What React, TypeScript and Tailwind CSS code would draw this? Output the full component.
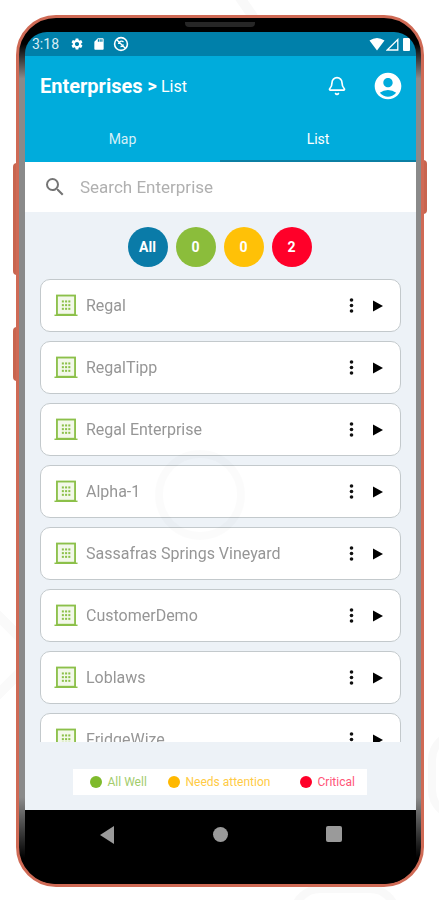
import { Bell } from "lucide-react";
import { MdAccountCircle, MdSdCard, MdSearch, MdSettings } from "react-icons/md";

const enterprises = [
  "Regal",
  "RegalTipp",
  "Regal Enterprise",
  "Alpha-1",
  "Sassafras Springs Vineyard",
  "CustomerDemo",
  "Loblaws",
  "FridgeWize",
];

function BuildingIcon() {
  return (
    <svg width="24" height="23" viewBox="0 0 26 24" className="shrink-0">
      <rect x="3.2" y="1.2" width="19.6" height="20.8" fill="#f3f8ea" stroke="#8cc04a" strokeWidth="2" />
      <path d="M0.5 22.6h25" stroke="#8cc04a" strokeWidth="1.6" />
      {[7.5, 11.5, 15.5].map((y) =>
        [9.5, 13, 16.5].map((x) => <rect key={`${x}-${y}`} x={x - 1} y={y - 1} width="2.2" height="2.2" fill="#8cc04a" />),
      )}
    </svg>
  );
}

function EnterpriseCard({ name }: { name: string }) {
  return (
    <div className="flex h-[53px] shrink-0 items-center rounded-[10px] border border-[#c3c9cc] bg-white pl-[13px] pr-[17px]">
      <BuildingIcon />
      <span className="ml-[8px] flex-1 text-[16px] text-[#969696]">{name}</span>
      <svg width="5" height="15" viewBox="0 0 5 15" className="mr-[19px]">
        <circle cx="2.5" cy="2" r="1.8" fill="#111" />
        <circle cx="2.5" cy="7.5" r="1.8" fill="#111" />
        <circle cx="2.5" cy="13" r="1.8" fill="#111" />
      </svg>
      <svg width="10" height="12" viewBox="0 0 10 12">
        <path d="M0 0.5 10 6 0 11.5Z" fill="#000" />
      </svg>
    </div>
  );
}

function CountBadge({ label, color }: { label: string; color: string }) {
  return (
    <div className={`flex h-10 w-10 items-center justify-center rounded-full text-[14px] font-bold text-white ${color}`}>
      {label}
    </div>
  );
}

function LegendItem({ label, dot, text, width }: { label: string; dot: string; text: string; width: string }) {
  return (
    <div className={`flex items-center gap-[6px] ${width}`}>
      <span className={`h-3 w-3 rounded-full ${dot}`} />
      <span className={`text-[12px] ${text}`}>{label}</span>
    </div>
  );
}

export default function App() {
  return (
    <div className="relative h-[900px] w-[439px] overflow-hidden bg-white pl-[16px] pt-[15px] font-['Roboto',sans-serif]">
      {/* faint watermark behind the phone */}
      <div className="absolute left-[240px] top-[-10px] h-[30px] w-[10px] -rotate-[35deg] bg-[#f9f9f9]" />
      <div className="absolute left-[-40px] top-[620px] h-[70px] w-[70px] rotate-45 border-[10px] border-[#fafafa]" />
      <div className="absolute left-[428px] top-[730px] h-[90px] w-[60px] rounded-full border-[8px] border-[#f9f9f9]" />
      <div className="absolute left-[290px] top-[885px] h-[60px] w-[110px] rounded-full border-[8px] border-[#f9f9f9]" />

      <div className="absolute left-[13px] top-[163px] h-[112px] w-[4px] rounded-l bg-[#c8654f]" />
      <div className="absolute left-[13px] top-[327px] h-[54px] w-[4px] rounded-l bg-[#c8654f]" />
      <div className="absolute left-[423px] top-[160px] h-[54px] w-[4px] rounded-r bg-[#c8654f]" />

      <div className="relative flex h-[872px] w-[408px] flex-col overflow-hidden rounded-[40px] border-[3px] border-[#cf6a55] bg-[linear-gradient(to_bottom,#000_3%,#8a8a8a_7%,#8a8a8a_90%,#000_97%)] blur-[0.4px]">
        <div className="absolute left-[166px] top-[4px] h-[5px] w-[70px] rounded-b bg-[#262626]" />

        <div className="ml-[6px] mr-[5px] mt-[14px] flex h-[778px] shrink-0 flex-col overflow-hidden rounded-t-[22px]">
          {/* status bar */}
          <div className="flex h-[24px] shrink-0 items-center bg-[#0080aa] pl-[7px] pr-[6px] text-white">
            <span className="text-[14px] text-[#d8edf5]">3:18</span>
            <MdSettings className="ml-[11px]" size={14} />
            <MdSdCard className="ml-[8px]" size={14} />
            <svg width="16" height="16" viewBox="0 0 16 16" className="ml-[7px]">
              <circle cx="8" cy="8" r="6.4" fill="none" stroke="white" strokeWidth="1.6" />
              <path d="M3.5 3.5 12.5 12.5M5.5 8a3 3 0 0 1 5-2M7.5 10.5a3 3 0 0 0 3-2" fill="none" stroke="white" strokeWidth="1.3" />
            </svg>
            <div className="flex-1" />
            <svg width="16" height="13" viewBox="0 0 16 13">
              <path d="M0.5 2.5Q8-2.5 15.5 2.5L8 12.5Z" fill="white" />
            </svg>
            <svg width="13" height="13" viewBox="0 0 13 13" className="ml-[1px]">
              <path d="M11.8 1.5V12H1.2Z" fill="none" stroke="white" strokeWidth="1.3" />
            </svg>
            <div className="ml-[4px] h-[13px] w-[7px] rounded-[1px] bg-white" />
          </div>

          {/* app bar */}
          <div className="flex h-[60px] shrink-0 items-center bg-[#00acdc] pl-[15px] pr-[12px] text-white">
            <span className="text-[20px] font-bold leading-none">Enterprises</span>
            <span className="ml-[5px] text-[18px] font-bold leading-none">&gt;</span>
            <span className="ml-[4px] mt-[2px] text-[16px] leading-none">List</span>
            <div className="flex-1" />
            <Bell size={20} strokeWidth={2} />
            <MdAccountCircle className="ml-[25px]" size={32} />
          </div>

          {/* tabs */}
          <div className="flex h-[46px] shrink-0 bg-[#00acdc] text-[14px] text-[#d5f0f8]">
            <div className="flex w-[195px] items-center justify-center">Map</div>
            <div className="flex flex-1 items-center justify-center border-b-2 border-[#0b7fa3] pt-[2px] text-white">List</div>
          </div>

          {/* search */}
          <div className="flex h-[50px] shrink-0 items-center bg-white pl-[18px]">
            <MdSearch size={24} className="text-[#757575]" />
            <span className="ml-[13px] pt-[2px] text-[17px] text-[#b0b0b0]">Search Enterprise</span>
          </div>

          <div className="relative flex flex-1 flex-col bg-[#edf2f7]">
            {/* status counts */}
            <div className="flex h-[67px] shrink-0 items-center justify-center gap-[8px] pr-[2px] pt-[3px]">
              <CountBadge label="All" color="bg-[#0a7ba8]" />
              <CountBadge label="0" color="bg-[#8bbd3b]" />
              <CountBadge label="0" color="bg-[#ffc107]" />
              <CountBadge label="2" color="bg-[#ff0029]" />
            </div>

            {/* list */}
            <div className="flex h-[463px] shrink-0 flex-col gap-[9px] overflow-hidden px-[15px]">
              {enterprises.map((name) => (
                <EnterpriseCard key={name} name={name} />
              ))}
            </div>

            {/* legend */}
            <div className="ml-[-2px] mt-[27px] flex h-[26px] w-[294px] items-center self-center bg-white pl-[17px]">
              <LegendItem label="All Well" dot="bg-[#7fba2c]" text="text-[#a3cc6c]" width="w-[78px]" />
              <LegendItem label="Needs attention" dot="bg-[#ffb800]" text="text-[#ffcb45]" width="w-[132px]" />
              <LegendItem label="Critical" dot="bg-[#ff0029]" text="text-[#ff5577]" width="w-[60px]" />
            </div>

            {/* watermark ring showing through the screen */}
            <div className="pointer-events-none absolute left-[130px] top-[238px] h-[90px] w-[90px] rounded-full border-[8px] border-[#00000004]" />
          </div>
        </div>

        {/* nav bar */}
        <div className="ml-[6px] mr-[5px] flex h-[74px] items-start justify-between rounded-b-[30px] bg-black px-[74px] pt-[16px]">
          <svg width="16" height="18" viewBox="0 0 16 18">
            <path d="M15 0V18L1 9Z" fill="#9a9a9a" />
          </svg>
          <div className="mt-[1px] h-[15px] w-[15px] rounded-full bg-[#9a9a9a]" />
          <div className="h-[16px] w-[16px] rounded-[2px] bg-[#9a9a9a]" />
        </div>
      </div>
    </div>
  );
}
